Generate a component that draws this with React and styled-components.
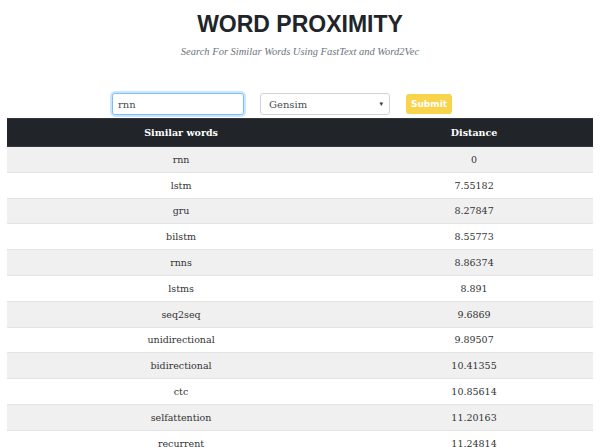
import React from 'react';
import styled, { createGlobalStyle } from 'styled-components';

const GlobalStyle = createGlobalStyle`
  body {
    margin: 0;
    background: #ffffff;
    font-family: "DejaVu Serif", serif;
    color: #333;
    overflow: hidden;
  }
`;

const rows = [
  ['rnn', '0'],
  ['lstm', '7.55182'],
  ['gru', '8.27847'],
  ['bilstm', '8.55773'],
  ['rnns', '8.86374'],
  ['lstms', '8.891'],
  ['seq2seq', '9.6869'],
  ['unidirectional', '9.89507'],
  ['bidirectional', '10.41355'],
  ['ctc', '10.85614'],
  ['selfattention', '11.20163'],
  ['recurrent', '11.24814'],
];

const App = () => {
  return (
    <Page>
      <GlobalStyle />
      <Header>
        <h1>WORD PROXIMITY</h1>
        <p>Search For Similar Words Using FastText and Word2Vec</p>
      </Header>

      <Form>
        <TextInput defaultValue="rnn" />
        <Select>
          <span>Gensim</span>
          <Caret>▾</Caret>
        </Select>
        <SubmitButton>Submit</SubmitButton>
      </Form>

      <Table>
        <thead>
          <tr>
            <HeadCell width="59.4%">Similar words</HeadCell>
            <HeadCell>Distance</HeadCell>
          </tr>
        </thead>
        <tbody>
          {rows.map(([word, dist], i) => (
            <Row key={word} striped={i % 2 === 0}>
              <Cell>{word}</Cell>
              <Cell>{dist}</Cell>
            </Row>
          ))}
        </tbody>
      </Table>
    </Page>
  );
};

export default App;

const Page = styled.div`
  padding: 0 7px;
`;

const Header = styled.div`
  text-align: center;
  padding-top: 11px;

  > h1 {
    margin: 0;
    font-family: "Liberation Sans", sans-serif;
    font-weight: 700;
    font-size: 23px;
    color: #212529;
    line-height: 26px;
  }

  > p {
    margin: 8px 0 0;
    font-family: "Liberation Serif", serif;
    font-style: italic;
    font-size: 10.5px;
    color: #6c757d;
    line-height: 14px;
  }
`;

const Form = styled.div`
  display: flex;
  align-items: flex-start;
  gap: 16px;
  padding-left: 105px;
  margin-top: 34px;
  height: 25px;
`;

const TextInput = styled.input`
  box-sizing: border-box;
  width: 132px;
  height: 22px;
  border: 1px solid #80bdff;
  border-radius: 3px;
  box-shadow: 0 0 0 2px rgba(0, 123, 255, 0.2);
  padding: 0 5px;
  font-family: "DejaVu Serif", serif;
  font-size: 10px;
  color: #495057;
  outline: none;
`;

const Select = styled.div`
  box-sizing: border-box;
  width: 130px;
  height: 22px;
  border: 1px solid #ced4da;
  border-radius: 3px;
  display: flex;
  align-items: center;
  justify-content: space-between;
  padding: 0 6px 0 8px;
  font-size: 10px;
  color: #495057;
`;

const Caret = styled.span`
  font-size: 7px;
  color: #333;
`;

const SubmitButton = styled.button`
  box-sizing: border-box;
  width: 46px;
  height: 20px;
  margin-top: 1px;
  border: none;
  border-radius: 3px;
  background: #f8d44c;
  color: #ffffff;
  font-family: "DejaVu Sans", sans-serif;
  font-weight: 700;
  font-size: 9px;
  padding: 0;
`;

const Table = styled.table`
  width: 100%;
  border-collapse: collapse;
  font-size: 9.5px;
  color: #333;
`;

const HeadCell = styled.th`
  width: ${(p) => p.width || 'auto'};
  height: 27px;
  padding: 0;
  background: #212529;
  border-top: 1px solid #32383e;
  border-bottom: 1px solid #32383e;
  color: #ffffff;
  font-weight: 700;
  font-size: 9.5px;
  text-align: center;
`;

const Row = styled.tr`
  background: ${(p) => (p.striped ? '#f0f0f0' : '#ffffff')};
  border-bottom: 1px solid #e4e4e4;
`;

const Cell = styled.td`
  height: 24.8px;
  padding: 0;
  text-align: center;
`;
